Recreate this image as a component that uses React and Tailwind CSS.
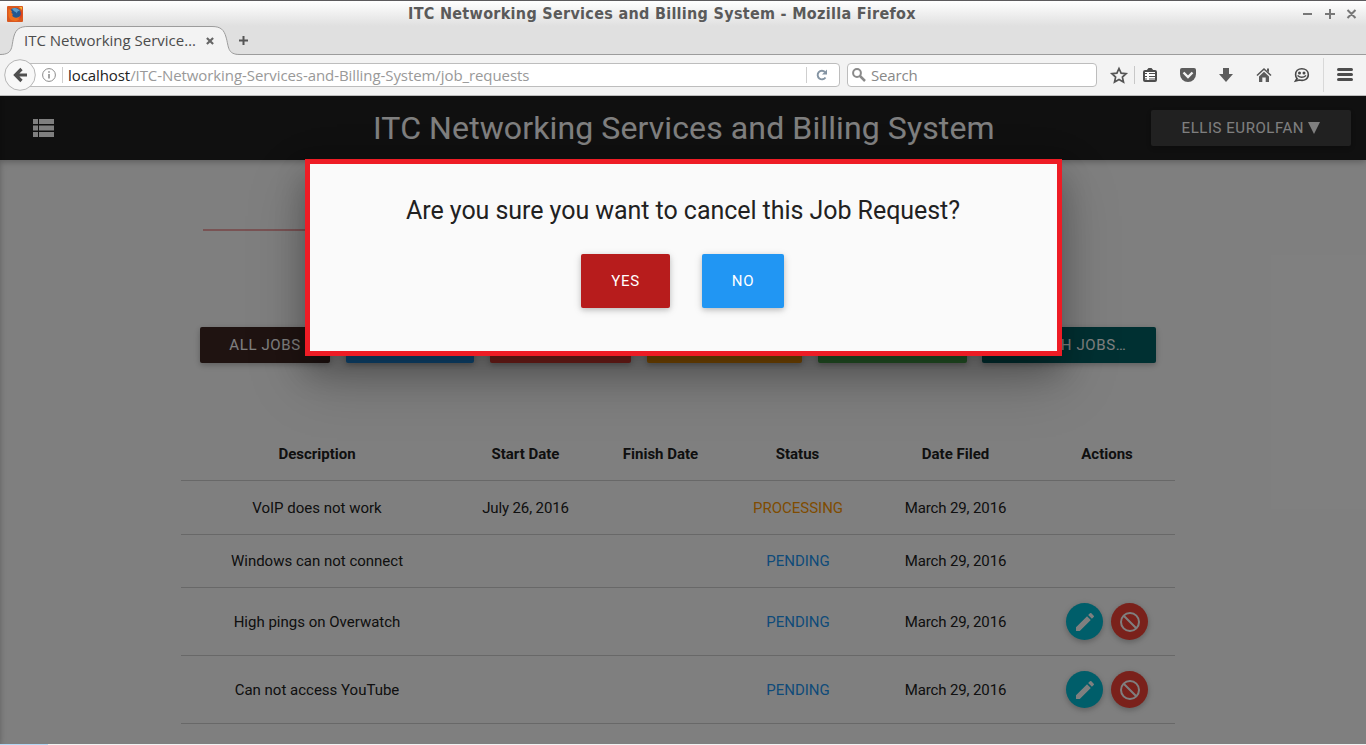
import React from "react";

const FLAT = "shadow-[0_2px_5px_rgba(0,0,0,0.16),0_2px_10px_rgba(0,0,0,0.12)]";
const UI = "font-['Open_Sans','Noto_Sans',sans-serif]";

function WindowBar() {
  return (
    <div className="flex h-[26px] items-center border-t border-[#5c5a5d] bg-linear-to-b from-white to-[#e0e0e0]">
      <svg className="ml-[7px] h-4 w-4 shrink-0" viewBox="0 0 16 16">
        <rect width="16" height="16" rx="1" fill="#d9581f" />
        <circle cx="8.3" cy="7.5" r="5.8" fill="#24588f" />
        <path d="M5 2.500c3-1.500 7 0 8 3-2-1-3 0-3 2-1-2-4-2-5-5z" fill="#5c9cc8" />
        <path d="M1.500 3c1.500 1 2.500 1 3.500 2.500-1 1-.5 2 1 2.500-1 1-1 2 .5 3 2 1.200 5 .8 6.500-1 0 3-2 5-5 5-4 0-6.500-3-6.500-6z" fill="#ee6f1c" />
        <path d="M13 4c1.500 3 1 7-2 9 3 0 5-3 4-7z" fill="#e0401f" />
        <path d="M12 1l3 3V1z" fill="#f3b93c" />
      </svg>
      <div className="ml-[385px] w-[520px] whitespace-nowrap font-['DejaVu_Sans_Condensed','DejaVu_Sans',sans-serif] text-[16px] leading-6 font-bold tracking-[0.3px] text-[#5a5a5a] [font-stretch:condensed]">
        ITC Networking Services and Billing System - Mozilla Firefox
      </div>
      <svg className="ml-[373px] h-4 w-[58px] shrink-0" viewBox="0 0 58 16" fill="none" stroke="#777" strokeWidth="2">
        <path d="M2 8h9M24 8h10M29 3v10M46.500 4l8 8M54.500 4l-8 8" />
      </svg>
    </div>
  );
}

function TabStrip() {
  return (
    <div className="flex h-[29px] bg-[#e0e0e0] shadow-[inset_0_-1px_0_#9c9c9c]">
      <div className="relative flex h-[29px] w-[236px] items-center">
        <svg className="absolute left-0 top-0 h-[29px] w-[240px]" viewBox="0 0 240 29">
          <path d="M0 28.500C14 28.500 11 20 14 10C16 3 20 .5 28 .5H212C221 .5 224 4 226 11C229 21 227 28.500 240 28.500V29H0z" fill="#f3f3f3" />
          <path d="M0 28.500C14 28.500 11 20 14 10C16 3 20 .5 28 .5H212C221 .5 224 4 226 11C229 21 227 28.500 240 28.500" fill="none" stroke="#9c9c9c" />
        </svg>
        <span className={`relative ml-6 w-[174px] whitespace-nowrap text-[15px] text-[#4c4c4c] ${UI}`}>ITC Networking Service…</span>
        <svg className="relative ml-[8px] h-[8px] w-[8px]" viewBox="0 0 9 9" stroke="#666" strokeWidth="2.400"><path d="M1 1l7 7M8 1L1 8" /></svg>
      </div>
      <svg className="ml-[3px] mt-[10px] h-[9px] w-[9px]" viewBox="0 0 9 9" stroke="#555" strokeWidth="2"><path d="M0 4.500h9M4.500 0v9" /></svg>
    </div>
  );
}

function ToolIcons() {
  return (
    <svg className="h-10 w-[269px] shrink-0" viewBox="1097 55 269 40" fill="none">
      <path d="M1119 68.500l2.100 4.700 5 .5-3.700 3.400 1.100 5-4.500-2.600-4.500 2.600 1.100-5-3.700-3.400 5-.5z" stroke="#555" strokeWidth="1.700" />
      <path d="M1134.500 66v18" stroke="#c8c8c8" />
      <rect x="1144" y="71" width="12" height="10" rx="1" fill="#fff" stroke="#4d4d4d" strokeWidth="2" />
      <path d="M1146 71l2.500-3h3l2.500 3z" fill="#4d4d4d" />
      <path d="M1145 73.500h2M1149 73.500h6M1145 76.500h2M1149 76.500h6M1145 79h2M1149 79h6" stroke="#4d4d4d" strokeWidth="1" />
      <path d="M1182 68h12q2 0 2 2v4a8 8 0 0 1-16 0v-4q0-2 2-2z" fill="#5c5c5c" />
      <path d="M1183.500 72.500l4.500 4.500 4.500-4.500" stroke="#f3f3f3" strokeWidth="2.400" />
      <path d="M1223 68h6v6h4l-7 8-7-8h4z" fill="#5c5c5c" />
      <path d="M1257 75.500l7-6.500 7 6.500" stroke="#555" strokeWidth="1.600" />
      <path d="M1259 76.500l5-4.700 5 4.700V82h-3.300v-4.500h-3.400V82H1259z" fill="#5c5c5c" />
      <path d="M1267 68.500h2v4l-2-2z" fill="#5c5c5c" />
      <path d="M1297 78.500l-1.500 2.500 4-1c5 1.200 8.800-1.200 8.800-5.300 0-3.500-2.800-5.900-6.500-5.900s-6.200 2.400-6.200 5.700c0 1.600.5 3 1.400 4z" stroke="#484848" strokeWidth="1.600" />
      <circle cx="1299.500" cy="73" r="1.500" fill="#484848" /><circle cx="1304" cy="73" r="1.500" fill="#484848" />
      <path d="M1297.500 75.500q4.300 3.500 8.600 0" stroke="#484848" strokeWidth="1.600" />
      <path d="M1323.500 58v34" stroke="#d8d8d8" />
      <path d="M1338.500 69.500h13M1338.500 74.500h13M1338.500 79.500h13" stroke="#4d4d4d" strokeWidth="3" strokeLinecap="round" />
    </svg>
  );
}

function AddressBar() {
  return (
    <div className="flex h-[41px] items-start border-b border-[#bcbcbc] bg-[#f3f3f3]">
      <div className="relative mt-2 ml-5 flex h-6 w-[820px] items-center rounded-sm border border-[#bdbdbd] bg-white">
        <svg className="absolute -left-[17px] -top-[5px] h-8 w-8" viewBox="0 0 32 32">
          <circle cx="16" cy="16" r="15.300" fill="#f8f8f8" stroke="#b5b5b5" />
          <path d="M23 16H12M17.500 10L11.500 16l6 6" fill="none" stroke="#505050" strokeWidth="3.200" />
        </svg>
        <svg className="ml-[21px] h-[14px] w-[14px]" viewBox="0 0 14 14" fill="none" stroke="#8c8c8c">
          <circle cx="7" cy="7" r="6.400" /><path d="M7 6v4.500M7 3.200v1.600" strokeWidth="1.600" />
        </svg>
        <span className="ml-[6px] h-4 w-px bg-[#cfcfcf]" />
        <span className={`ml-[5px] whitespace-nowrap text-[15px] tracking-[-0.08px] text-[#999] ${UI}`}><span className="text-[#222]">localhost</span>/ITC-Networking-Services-and-Billing-System/job_requests</span>
        <span className="ml-auto h-4 w-px bg-[#cfcfcf]" />
        <svg className="mr-[11px] ml-[9px] h-3 w-3" viewBox="0 0 12 12"><path d="M9.500 8.500A4.300 4.300 0 1 1 9 3" fill="none" stroke="#8494a3" strokeWidth="1.900" /><path d="M6 5.500h5V.5z" fill="#8494a3" /></svg>
      </div>
      <div className="mt-2 ml-[7px] flex h-6 w-[250px] items-center rounded-sm border border-[#bdbdbd] bg-white">
        <svg className="ml-1 h-[14px] w-[14px]" viewBox="0 0 14 14" fill="none" stroke="#8a8a8a"><circle cx="5" cy="5" r="3.900" strokeWidth="2" /><path d="M8 8l5 5" strokeWidth="2.500" /></svg>
        <span className={`ml-[5px] text-[15px] tracking-[-0.15px] text-[#888] ${UI}`}>Search</span>
      </div>
      <ToolIcons />
    </div>
  );
}

function PageHeader() {
  return (
    <header className={`relative flex h-16 items-center bg-[#212121] text-white ${FLAT}`}>
      <svg className="ml-[33px] h-[18px] w-[21px]" viewBox="0 0 21 18" fill="#fff"><path d="M0 0h5v5H0zM6 0h15v5H6zM0 6.500h5v5H0zM6 6.500h15v5H6zM0 13h5v5H0zM6 13h15v5H6z" /></svg>
      <h1 className="ml-[319px] w-[640px] whitespace-nowrap text-[32px] leading-[64px] tracking-[0.11px]">ITC Networking Services and Billing System</h1>
      <button className={`ml-[138px] flex h-9 w-[200px] items-center justify-center whitespace-nowrap rounded-xs bg-[#424242] text-[15px] tracking-[0.55px] ${FLAT}`}>
        ELLIS EUROLFAN&nbsp;<svg className="h-[12px] w-[12px]" viewBox="0 0 11 11"><path d="M0 0h11L5.500 11z" fill="#fff" /></svg>
      </button>
    </header>
  );
}

function FilterButtons() {
  const base = `flex h-9 shrink-0 items-center justify-center rounded-xs whitespace-nowrap text-[15px] tracking-[0.6px] text-white ${FLAT}`;
  return (
    <div className="mt-[96px] ml-[200px] flex">
      <button className={`${base} w-[130px] bg-[#3e2723]`}>ALL JOBS</button>
      <button className={`${base} ml-4 w-32 bg-[#2196f3]`}>PENDING</button>
      <button className={`${base} ml-4 w-[141px] bg-[#f44336]`}>CANCELED</button>
      <button className={`${base} ml-4 w-[155px] bg-[#ff9800]`}>PROCESSING</button>
      <button className={`${base} ml-4 w-[149px] bg-[#4caf50]`}>FINISHED</button>
      <button className={`${base} ml-[15px] w-[174px] bg-[#006064]`}>SEARCH JOBS…</button>
    </div>
  );
}

function Action({ kind }) {
  const edit = kind === "edit";
  return (
    <span className={`flex h-[37px] w-[37px] items-center justify-center rounded-full ${FLAT} ${edit ? "bg-[#00bcd4]" : "bg-[#f44336]"}`}>
      {edit ? (
        <svg className="h-6 w-6" viewBox="0 0 24 24" fill="#fff"><path d="M3 17.250V21h3.750L17.810 9.940l-3.750-3.750L3 17.250zM20.710 7.040a1 1 0 0 0 0-1.410l-2.340-2.340a1 1 0 0 0-1.410 0l-1.830 1.830 3.750 3.750 1.830-1.830z" /></svg>
      ) : (
        <svg className="h-6 w-6" viewBox="0 0 24 24" fill="none" stroke="#fff" strokeWidth="2"><circle cx="12" cy="12" r="9" /><path d="M5.500 5.500l13 13" /></svg>
      )}
    </span>
  );
}

const rows = [
  { d: "VoIP does not work", s: "July 26, 2016", st: "PROCESSING", h: "h-[54px]", t: "pt-[2px]" },
  { d: "Windows can not connect", s: "", st: "PENDING", h: "h-[53px]", t: "" },
  { d: "High pings on Overwatch", s: "", st: "PENDING", h: "h-[68px]", t: "pt-[2px]", a: true },
  { d: "Can not access YouTube", s: "", st: "PENDING", h: "h-[68px]", t: "pt-[2px]", a: true },
];
const GRID = "grid grid-cols-[272px_145px_125px_149px_167px_136px] items-center border-b border-[#d0d0d0] text-center";

function JobTable() {
  return (
    <div className="mt-[64px] ml-[181px] w-[994px] text-[15px] text-[#212121]">
      <div className={`${GRID} h-[54px] pt-[2px] font-bold`}>
        <span>Description</span><span>Start Date</span><span>Finish Date</span><span>Status</span><span>Date Filed</span><span>Actions</span>
      </div>
      {rows.map((r) => (
        <div key={r.d} className={`${GRID} ${r.h}`}>
          <span className={r.t}>{r.d}</span>
          <span className={`${r.t} tracking-[-0.12px]`}>{r.s}</span>
          <span />
          <span className={`${r.t} pl-px ${r.st === "PENDING" ? "text-[#2196f3]" : "text-[#ff9800]"}`}>{r.st}</span>
          <span className={`${r.t} tracking-[-0.12px]`}>March 29, 2016</span>
          <span className="flex justify-center gap-2">{r.a && <><Action kind="edit" /><Action kind="cancel" /></>}</span>
        </div>
      ))}
    </div>
  );
}

function ConfirmDialog() {
  const btn = `flex h-[54px] items-center justify-center rounded-xs text-[15px] tracking-[0.7px] text-white ${FLAT}`;
  return (
    <div className="absolute left-[305px] top-[63px] h-[197px] w-[757px] border-[5px] border-[#ee1c25] bg-[#fafafa] text-center shadow-[0_16px_28px_rgba(0,0,0,0.22),0_25px_55px_rgba(0,0,0,0.21)]">
      <h2 className="mt-[29px] pr-px text-[25px] leading-9 tracking-[-0.05px] text-[#212121]">Are you sure you want to cancel this Job Request?</h2>
      <div className="mt-[25px] flex justify-center gap-8 pr-[2px]">
        <button className={`${btn} w-[89px] bg-[#b71c1c]`}>YES</button>
        <button className={`${btn} w-[82px] bg-[#2196f3]`}>NO</button>
      </div>
    </div>
  );
}

export default function App() {
  return (
    <div className="flex h-[745px] w-[1366px] flex-col overflow-hidden bg-[#f2f2f2]">
      <WindowBar />
      <TabStrip />
      <AddressBar />
      <main className="relative h-[648px] overflow-hidden bg-white font-[Roboto,sans-serif]">
        <PageHeader />
        <div className="mt-[69px] ml-[203px] h-[2px] w-[600px] bg-[#f3a6a9]" />
        <FilterButtons />
        <JobTable />
        <div className="absolute top-0 -left-[10px] h-full w-[10px] shadow-[0_2px_5px_rgba(0,0,0,0.16),0_2px_10px_rgba(0,0,0,0.12)]" />
        <div className="absolute inset-0 bg-black/50" />
        <ConfirmDialog />
      </main>
      <div className="h-px w-12 bg-[#b5d8f5]" />
    </div>
  );
}
